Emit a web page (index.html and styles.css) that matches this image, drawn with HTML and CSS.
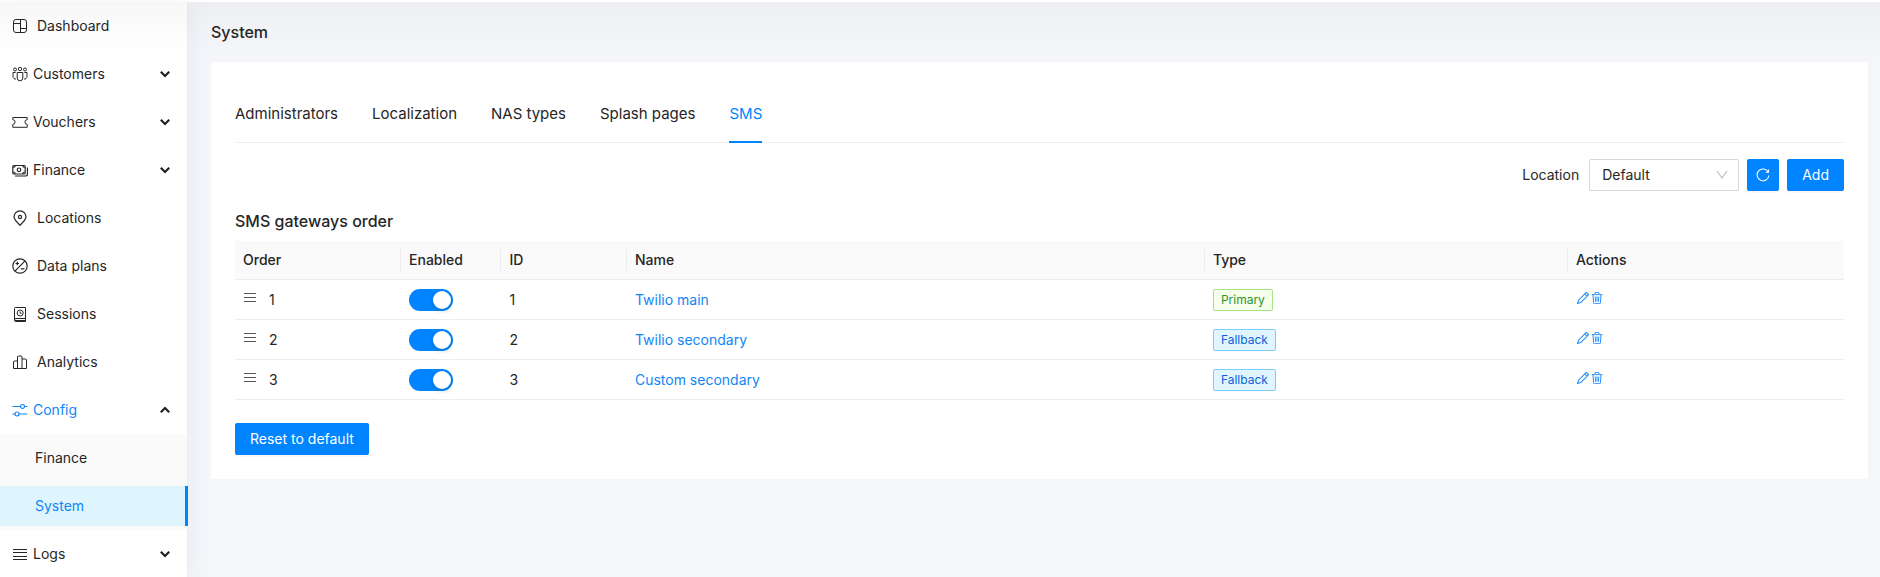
FILE: index.html
```html
<!DOCTYPE html>
<html lang="en">
<head>
<meta charset="utf-8">
<title>System – SMS</title>
<link rel="stylesheet" href="styles.css">
</head>
<body>
<svg class="sprite" aria-hidden="true">
  <symbol id="chevron" viewBox="0 0 10 8"><path d="M.8 1.800l4.200 4.200 4.200-4.200" fill="none" stroke="#222" stroke-width="2.200"/></symbol>
  <symbol id="drag" viewBox="0 0 14 14"><path d="M1 2.500h12M1 6.500h12M1 10.500h12" fill="none" stroke="currentColor"/></symbol>
  <symbol id="pencil" viewBox="0 0 16 16"><path d="M12.15.15a.5.5 0 0 1 .7 0l3 3a.5.5 0 0 1 0 .7l-10 10a.5.5 0 0 1-.17.12l-5 2a.5.5 0 0 1-.65-.65l2-5a.5.5 0 0 1 .12-.17zM11.2 2.5 13.5 4.8 14.8 3.5 12.5 1.2zM12.8 5.5 10.5 3.2 3 10.7l-1.5 3.8L5.3 13z" fill="currentColor" stroke="currentColor" stroke-width=".3" fill-rule="evenodd"/></symbol>
  <symbol id="trash" viewBox="0 0 16 16"><path d="M1 3.500h14M5.500 3V1.500a1 1 0 0 1 1-1h3a1 1 0 0 1 1 1V3M2.600 3.500l.9 11a1 1 0 0 0 1 1h7a1 1 0 0 0 1-1l.9-11M5.700 6l.3 7M8 6v7M10.300 6l-.3 7" fill="none" stroke="currentColor" stroke-width="1.200"/></symbol>
</svg>
<div class="layout">
  <nav class="sidebar" aria-label="Main">
    <ul class="menu">
      <li><a class="item leaf" href="#"><svg class="icon" viewBox="0 0 16 16"><rect x="1.500" y="1.500" width="13" height="13" rx="2.500"/><path d="M8.500 1.500v13M1.500 5.500h7M8.500 10.500h6"/></svg>Dashboard</a></li>
      <li><button class="item" type="button"><svg class="icon" viewBox="0 0 16 16"><circle cx="8" cy="3" r="1.700"/><circle cx="3" cy="3.500" r="1.500"/><circle cx="13" cy="3.500" r="1.500"/><path d="M5.200 6.500h5.600v5.500a2.800 2.800 0 0 1-5.600 0zM3.600 6.500H1v4a2.500 2.500 0 0 0 3 2.500M12.400 6.500H15v4a2.500 2.500 0 0 1-3 2.500"/></svg>Customers<svg class="arrow"><use href="#chevron"/></svg></button></li>
      <li><button class="item" type="button"><svg class="icon" viewBox="0 0 16 16"><path d="M.8 3.500h14.400v2.200a2.300 2.300 0 0 0 0 4.600v3H.8v-3a2.300 2.300 0 0 0 0-4.600z"/></svg>Vouchers<svg class="arrow"><use href="#chevron"/></svg></button></li>
      <li><button class="item" type="button"><svg class="icon bold" viewBox="0 0 16 16"><rect x=".8" y="3.500" width="12.400" height="8.500" rx="1"/><circle cx="7" cy="7.800" r="1.800"/><path d="M3.200 3.500a2 2 0 0 1-2 2M10.800 3.500a2 2 0 0 0 2 2M3.200 12a2 2 0 0 0-2-2M10.800 12a2 2 0 0 1 2-2M3 14h10.500a2 2 0 0 0 2-2V5.500"/></svg>Finance<svg class="arrow"><use href="#chevron"/></svg></button></li>
      <li><a class="item leaf" href="#"><svg class="icon bold" viewBox="0 0 16 16"><path d="M8 15.300C4.500 12 2 9.500 2 6.800a6 6 0 0 1 12 0c0 2.700-2.500 5.200-6 8.500z"/><circle cx="8" cy="7" r="1.600"/></svg>Locations</a></li>
      <li><a class="item leaf" href="#"><svg class="icon bold" viewBox="0 0 16 16"><circle cx="8" cy="8" r="7.200"/><path d="M3 13.100 13 2.900M3.600 5.500h3.400M5.300 3.800v3.400M8.800 10.800h3.600"/></svg>Data plans</a></li>
      <li><a class="item leaf" href="#"><svg class="icon" viewBox="0 0 16 16"><path d="M13.500 12.500v-11h-10a1 1 0 0 0-1 1V14.500a1 1 0 0 0 1 1h10M2.500 14a1.500 1.500 0 0 1 1.500-1.500h9.500v3M3 14.500h10.500"/><circle cx="8.200" cy="7" r="3"/><path d="M8.200 5.500V7.300h1.300"/></svg>Sessions</a></li>
      <li><a class="item leaf" href="#"><svg class="icon" viewBox="0 0 16 16"><path d="M1.500 14.500V8a1 1 0 0 1 1-1h3v7.500zM5.500 14.500V3a1 1 0 0 1 1-1h2.500a1 1 0 0 1 1 1v11.500zM10 5h3.500a1 1 0 0 1 1 1v8.500H10"/></svg>Analytics</a></li>
      <li><button class="item open" type="button" aria-expanded="true"><svg class="icon bold" viewBox="0 0 16 16"><path d="M.5 4.500h8M12.500 4.500h3M.5 12h2.500M7 12h8.500"/><circle cx="10.500" cy="4.500" r="2"/><circle cx="5" cy="12" r="2"/></svg>Config<svg class="arrow up"><use href="#chevron"/></svg></button>
        <ul class="submenu">
          <li><a class="item" href="#">Finance</a></li>
          <li><a class="item active" href="#" aria-current="page">System</a></li>
        </ul>
      </li>
      <li><button class="item" type="button"><svg class="icon" viewBox="0 0 16 16"><path d="M1 3.500h14M1 6.500h14M1 10.500h14M1 13.500h14"/></svg>Logs<svg class="arrow"><use href="#chevron"/></svg></button></li>
    </ul>
  </nav>
  <main class="main">
    <h1 class="heading">System</h1>
    <section class="card">
      <div class="tabs" role="tablist">
        <button class="tab" type="button" role="tab">Administrators</button>
        <button class="tab" type="button" role="tab">Localization</button>
        <button class="tab" type="button" role="tab">NAS types</button>
        <button class="tab" type="button" role="tab">Splash pages</button>
        <button class="tab selected" type="button" role="tab" aria-selected="true">SMS</button>
      </div>
      <div class="toolbar">
        <label for="location">Location</label>
        <span class="picker">
          <select id="location"><option>Default</option></select>
          <svg class="caret" viewBox="0 0 12 12"><path d="M1 2l5 7 5-7" fill="none" stroke="#bfbfbf" stroke-width="1.200"/></svg>
        </span>
        <button class="btn square" type="button" aria-label="Refresh"><svg class="refresh" viewBox="0 0 14 14"><path d="M12.200 4A5.900 5.900 0 1 0 12.900 7.500M12.500 1.500v2.800H9.800" fill="none" stroke="#fff" stroke-width="1.100"/></svg></button>
        <button class="btn" type="button">Add</button>
      </div>
      <h2 class="subheading">SMS gateways order</h2>
      <table class="grid">
        <colgroup><col class="c-order"><col class="c-enabled"><col class="c-id"><col class="c-name"><col class="c-type"><col class="c-actions"></colgroup>
        <thead><tr><th>Order</th><th>Enabled</th><th>ID</th><th>Name</th><th>Type</th><th>Actions</th></tr></thead>
        <tbody>
          <tr><td><span class="order"><svg class="drag"><use href="#drag"/></svg>1</span></td><td><input class="switch" type="checkbox" role="switch" checked aria-label="Enable Twilio main"></td><td>1</td><td><a href="#">Twilio main</a></td><td><span class="tag primary">Primary</span></td><td><span class="actions"><button type="button" aria-label="Edit"><svg><use href="#pencil"/></svg></button><button type="button" aria-label="Delete"><svg><use href="#trash"/></svg></button></span></td></tr>
          <tr><td><span class="order"><svg class="drag"><use href="#drag"/></svg>2</span></td><td><input class="switch" type="checkbox" role="switch" checked aria-label="Enable Twilio secondary"></td><td>2</td><td><a href="#">Twilio secondary</a></td><td><span class="tag">Fallback</span></td><td><span class="actions"><button type="button" aria-label="Edit"><svg><use href="#pencil"/></svg></button><button type="button" aria-label="Delete"><svg><use href="#trash"/></svg></button></span></td></tr>
          <tr><td><span class="order"><svg class="drag"><use href="#drag"/></svg>3</span></td><td><input class="switch" type="checkbox" role="switch" checked aria-label="Enable Custom secondary"></td><td>3</td><td><a href="#">Custom secondary</a></td><td><span class="tag">Fallback</span></td><td><span class="actions"><button type="button" aria-label="Edit"><svg><use href="#pencil"/></svg></button><button type="button" aria-label="Delete"><svg><use href="#trash"/></svg></button></span></td></tr>
        </tbody>
      </table>
      <button class="btn" type="button">Reset to default</button>
    </section>
  </main>
</div>
</body>
</html>
```
FILE: styles.css
```css
* { box-sizing: border-box; }
body {
  margin: 0;
  font: 14px/22px Inter, "Liberation Sans", sans-serif;
  color: #262626;
  background: #f5f6fa;
}
button, select { font: inherit; color: inherit; }
button { cursor: pointer; }
a { color: #0f86f7; text-decoration: none; }
ul { list-style: none; margin: 0; padding: 0; }
.sprite { display: none; }

.layout {
  position: relative;
  display: flex;
  min-height: 100vh;
  border-top: 2px solid #fff;
}
.layout::before {
  content: "";
  position: absolute;
  inset: 0 0 auto 0;
  height: 52px;
  background: linear-gradient(rgba(0, 0, 0, 0.03), rgba(0, 0, 0, 0));
  pointer-events: none;
  z-index: 2;
}

.sidebar {
  flex: 0 0 188px;
  background: #fff;
  border-right: 1px solid #eceef3;
  box-shadow: 2px 0 24px rgba(30, 40, 90, 0.05);
}
.menu > li { display: flow-root; }
.item {
  position: relative;
  display: flex;
  align-items: center;
  gap: 5px;
  width: 100%;
  height: 40px;
  margin: 4px 0;
  padding: 0 17px 0 12px;
  border: 0;
  background: none;
  color: #262626;
  text-align: left;
}
.item.leaf { gap: 9px; }
.icon {
  width: 16px;
  height: 16px;
  fill: none;
  stroke: currentColor;
  stroke-width: 1;
}
.icon.bold { stroke-width: 1.2; }
.arrow { width: 10px; height: 8px; margin-left: auto; }
.arrow.up { transform: rotate(180deg); }
.item.open { color: #0f86f7; }
.submenu { background: #fafafa; }
.submenu li { display: flow-root; }
.submenu .item { padding-left: 35px; }
.submenu .item.active { background: #dff5fe; color: #0f86f7; }
.submenu .item.active::after {
  content: "";
  position: absolute;
  inset: 0 -1px 0 auto;
  width: 3px;
  background: #0084ff;
}

.main { flex: 1; min-width: 0; padding: 18px 12px 24px 23px; }
.heading { margin: 0 0 18px; font-size: 16px; line-height: 24px; font-weight: 500; }
.card { padding: 24px; background: #fff; }

.tabs { display: flex; gap: 34px; border-bottom: 1px solid #efefef; }
.tab {
  padding: 16px 0 15px;
  margin-bottom: -1px;
  border: 0;
  border-bottom: 2px solid transparent;
  background: none;
  font-size: 15px;
  line-height: 24px;
}
.tab.selected { color: #0084ff; border-color: #0084ff; }

.toolbar { display: flex; justify-content: flex-end; align-items: center; gap: 8px; margin: 16px 0 18px; }
.toolbar label { margin-right: 2px; }
.picker { position: relative; }
.picker select {
  display: block;
  width: 150px;
  height: 32px;
  padding: 0 12px;
  border: 1px solid #d9d9d9;
  border-radius: 2px;
  background: #fff;
  appearance: none;
}
.caret { position: absolute; right: 11px; top: 10px; width: 12px; height: 12px; pointer-events: none; }
.btn {
  height: 32px;
  padding: 0 15px;
  border: 0;
  border-radius: 2px;
  background: #0084ff;
  color: #fff;
  box-shadow: 0 2px 0 rgba(0, 0, 0, 0.03);
}
.btn.square { width: 32px; padding: 0; display: grid; place-items: center; }
.refresh { width: 14px; height: 14px; }

.subheading { margin: 0 0 8px; font-size: 16px; line-height: 24px; font-weight: 500; }
.grid { width: 100%; margin-bottom: 23px; table-layout: fixed; border-collapse: separate; border-spacing: 0; }
.c-order { width: 10.32%; }
.c-enabled { width: 6.24%; }
.c-id { width: 7.8%; }
.c-name { width: 35.92%; }
.c-type { width: 22.56%; }
.c-actions { width: 17.16%; }
.grid th, .grid td { padding: 0 8px; border-bottom: 1px solid #ededed; text-align: left; vertical-align: middle; }
.grid th { position: relative; height: 39px; background: #fafafa; font-weight: 500; }
.grid th:not(:last-child)::after {
  content: "";
  position: absolute;
  right: 0;
  top: 8px;
  width: 1px;
  height: 22px;
  background: #ebebeb;
}
.grid td { height: 40px; }
.order { display: flex; align-items: center; gap: 12px; }
.drag { width: 14px; height: 14px; margin-bottom: 4px; color: #555; }
.switch {
  display: block;
  appearance: none;
  width: 44px;
  height: 22px;
  margin: 0;
  padding: 2px;
  border-radius: 11px;
  background: #0084ff;
}
.switch::before {
  content: "";
  display: block;
  width: 18px;
  height: 18px;
  margin-left: auto;
  border-radius: 50%;
  background: #fff;
  box-shadow: 0 2px 4px rgba(0, 35, 11, 0.2);
}
.tag {
  display: inline-block;
  padding: 0 7px;
  border: 1px solid #7cccff;
  border-radius: 2px;
  background: #e0f5ff;
  color: #0b62d6;
  font-size: 12px;
  line-height: 20px;
  vertical-align: middle;
}
.tag.primary { border-color: #a3e87c; background: #f5ffeb; color: #2f962b; }
.actions { display: flex; margin-bottom: 4px; }
.actions button { display: flex; padding: 0 1px; border: 0; background: none; color: #0f86f7; }
.actions svg { width: 12px; height: 12px; }
```
